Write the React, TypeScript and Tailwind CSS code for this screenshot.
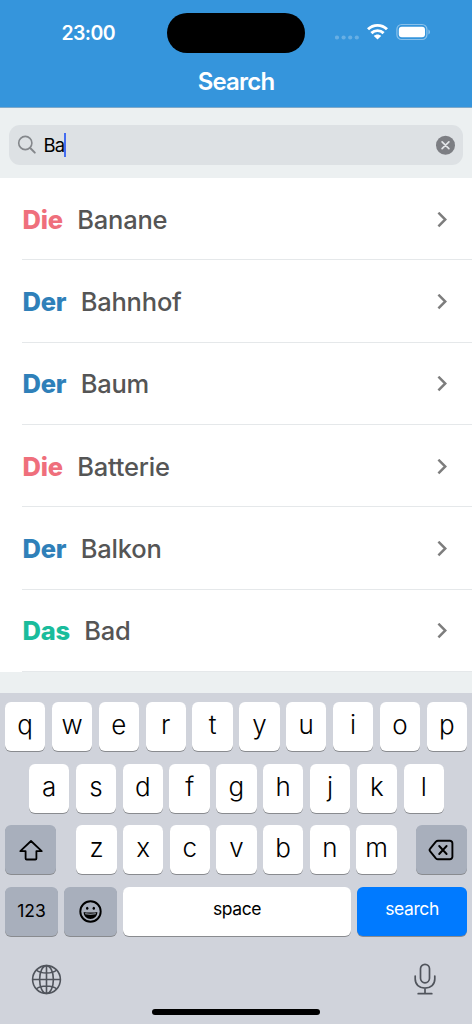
import type { ReactNode } from "react";
import clsx from "clsx";

const words = [
  { article: "Die", noun: "Banane" },
  { article: "Der", noun: "Bahnhof" },
  { article: "Der", noun: "Baum" },
  { article: "Die", noun: "Batterie" },
  { article: "Der", noun: "Balkon" },
  { article: "Das", noun: "Bad" },
];

const articleColors: Record<string, string> = {
  Die: "text-[#ef6f7c]",
  Der: "text-[#2f80b9]",
  Das: "text-[#1abc9c]",
};

function StatusBar() {
  return (
    <div className="flex h-[65px] items-start">
      <div className="w-[167px] pt-5 pl-[61.5px] text-[19.5px] leading-[27px] font-semibold tracking-[-0.6px]">
        23:00
      </div>
      <div className="mt-[12.5px] h-[40.5px] w-[138px] rounded-full bg-black" />
      <div className="flex pt-[23px] pl-[30px]">
        <svg width="24" height="18" viewBox="0 0 24 18" fill="#fff" opacity="0.25">
          <circle cx="2" cy="14.5" r="2.1" />
          <circle cx="8.6" cy="14.5" r="2.1" />
          <circle cx="15.2" cy="14.5" r="2.1" />
          <circle cx="21.8" cy="14.5" r="2.1" />
        </svg>
        <svg className="ml-2" width="21" height="18" viewBox="0 0 21 18" fill="none" stroke="#fff" strokeWidth="2.9">
          <path d="M1 6.3C6.2 1 14.8 1 20 6.3" />
          <path d="M4.4 10.1c3.4-3.3 8.8-3.3 12.2 0" />
          <path d="M6.8 12.9c2.1-2 5.3-2 7.4 0l-3.7 3.7z" fill="#fff" stroke="none" />
        </svg>
        <svg className="ml-2" width="35" height="18" viewBox="0 0 35 18">
          <rect x="0.9" y="1.5" width="30" height="15" rx="4.8" fill="none" stroke="#fff" strokeWidth="1.2" opacity="0.42" />
          <rect x="2.8" y="3.7" width="26.2" height="10.6" rx="3" fill="#fff" />
          <path d="M32.5 6.5c1.8.7 1.8 4.3 0 5z" fill="#fff" opacity="0.5" />
        </svg>
      </div>
    </div>
  );
}

function SearchField() {
  return (
    <div className="h-[70px] bg-[#ecf0f1] px-[9px] pt-[17px]">
      <div className="flex h-[39.5px] items-center rounded-[11px] bg-[#dde1e4] px-2">
        <svg width="20" height="20" viewBox="0 0 20 20" fill="none" stroke="#84878b" strokeLinecap="round">
          <circle cx="8.3" cy="8" r="6.6" strokeWidth="1.6" />
          <path d="M13.2 13l4.6 4.6" strokeWidth="2" />
        </svg>
        <span className="ml-[6.5px] pt-px text-[18.5px] leading-6 tracking-[-0.8px] text-black">Ba</span>
        <span className="h-[23.5px] w-[2px] bg-[#446cf0]" />
        <svg className="ml-auto" width="19" height="20" viewBox="0 0 19 20">
          <circle cx="9.5" cy="10.3" r="9.5" fill="#7c7e83" />
          <path d="M6.1 6.9l6.8 6.8M12.9 6.9l-6.8 6.8" stroke="#e2e5e8" strokeWidth="1.7" strokeLinecap="round" />
        </svg>
      </div>
    </div>
  );
}

function WordRow({ article, noun }: { article: string; noun: string }) {
  return (
    <li className="ml-[22px] flex h-[82.33px] items-center border-b border-[#e5e8ea] pt-[2px] pr-[25px] text-[25.5px] text-[#555]">
      <span className={clsx("pl-[0.5px] font-extrabold tracking-[-0.2px]", articleColors[article])}>{article}</span>
      <span className="ml-[14.3px] font-medium tracking-[-0.2px]">{noun}</span>
      <svg className="ml-auto" width="10" height="16" viewBox="0 0 10 16" fill="none" stroke="#7d7d7d" strokeWidth="2.5">
        <path d="M1.4 0.7L8.3 7.5l-6.9 6.8" />
      </svg>
    </li>
  );
}

function Key({ children, className }: { children: ReactNode; className?: string }) {
  return (
    <div className={clsx("flex h-[49px] items-center justify-center rounded-[6px] shadow-[0_1px_0_#898b8f]", className)}>
      {children}
    </div>
  );
}

function LetterKeys({ letters }: { letters: string }) {
  return letters.split("").map((letter) => (
    <Key key={letter} className="w-[40.4px] bg-white pb-[4px] text-[26px] font-[350]">
      {letter}
    </Key>
  ));
}

function Keyboard() {
  return (
    <div className="h-[331px] bg-[#d0d3db] px-[5px] pt-[9px] text-black">
      <div className="flex flex-col gap-[12.5px]">
        <div className="flex justify-between">
          <LetterKeys letters="qwertyuiop" />
        </div>
        <div className="flex justify-between pr-[23px] pl-[24px]">
          <LetterKeys letters="asdfghjkl" />
        </div>
        <div className="flex justify-between">
          <Key className="w-[51px] bg-[#a8afbc]">
            <svg width="24" height="22" viewBox="0 0 24 22" fill="none" stroke="#000" strokeWidth="1.8" strokeLinejoin="round">
              <path d="M12 2L1.3 12.2h5.3v7.2c0 .7.4 1.1 1.1 1.1h8.6c.7 0 1.1-.4 1.1-1.1v-7.2h5.3z" />
            </svg>
          </Key>
          <div className="flex gap-[6.3px] pl-[1px]">
            <LetterKeys letters="zxcvbnm" />
          </div>
          <Key className="w-[51px] bg-[#a8afbc]">
            <svg width="26" height="22" viewBox="0 0 26 22" fill="none" stroke="#000" strokeWidth="1.9" strokeLinecap="round" strokeLinejoin="round">
              <path d="M10 1.8h11.9a2.5 2.5 0 0 1 2.5 2.5v13.4a2.5 2.5 0 0 1-2.5 2.5H10c-.9 0-1.5-.3-2.1-.9L2.2 12.4c-.9-.9-.9-1.9 0-2.8L7.9 2.7c.6-.6 1.2-.9 2.1-.9z" />
              <path d="M11.2 7l7.4 8M18.6 7l-7.4 8" />
            </svg>
          </Key>
        </div>
        <div className="flex gap-[6px]">
          <Key className="w-[53px] bg-[#a8afbc] text-[17.5px] tracking-[-0.1px]">123</Key>
          <Key className="w-[53px] bg-[#a8afbc]">
            <svg width="23" height="23" viewBox="0 0 23 23">
              <circle cx="11.5" cy="11.5" r="10.2" fill="none" stroke="#000" strokeWidth="1.9" />
              <ellipse cx="8.2" cy="8.2" rx="1.2" ry="1.5" />
              <ellipse cx="14.8" cy="8.2" rx="1.2" ry="1.5" />
              <path d="M4.7 12c2 .7 11.6.7 13.6 0 .2 4-3 6.9-6.800 6.900S4.500 16 4.700 12z" />
              <path d="M6 13.3c3 .5 8 .5 11 0l-.3.9c-2.800.6-7.600.6-10.400 0z" fill="#a8afbc" />
            </svg>
          </Key>
          <Key className="w-[228px] bg-white pb-[3px] text-[17.5px] tracking-[-0.4px]">space</Key>
          <Key className="flex-1 bg-[#007aff] pb-[3px] text-[17.5px] tracking-[-0.4px] text-white">search</Key>
        </div>
      </div>
      <div className="flex items-center justify-between pt-[27px] pr-[31px] pl-[26px]">
        <svg width="31" height="32" viewBox="0 0 31 32" fill="none" stroke="#50545c" strokeWidth="1.6">
          <circle cx="15.5" cy="16.5" r="13.9" />
          <ellipse cx="15.5" cy="16.5" rx="6.9" ry="13.9" />
          <path d="M15.5 2.5v28M1.5 16.5h28M5.2 7c5 4 15.6 4 20.6 0M5.2 26c5-4 15.6-4 20.6 0" />
        </svg>
        <svg width="22" height="32" viewBox="0 0 22 32" fill="none" stroke="#50545c" strokeWidth="1.7" strokeLinecap="round">
          <rect x="6.5" y="1.3" width="9" height="18.5" rx="4.5" />
          <path d="M1.2 13v3c0 5.5 4 9.2 9.8 9.2s9.8-3.7 9.8-9.2v-3M11 25.2v5.5M4.2 30.7h13.6" />
        </svg>
      </div>
      <div className="mx-auto mt-[14px] h-[6px] w-[168px] rounded-full bg-black" />
    </div>
  );
}

export default function App() {
  return (
    <div className="flex h-[1024px] w-[472px] flex-col overflow-hidden bg-[#ecf0f1] font-['Inter',sans-serif]">
      <header className="h-[108px] border-b border-[#7fa9c9] bg-[#3595dc] text-white">
        <StatusBar />
        <h1 className="text-center text-[24px] leading-[34px] font-semibold tracking-[-0.8px]">Search</h1>
      </header>
      <SearchField />
      <ul className="h-[494px] bg-white">
        {words.map((word) => (
          <WordRow key={word.noun} {...word} />
        ))}
      </ul>
      <div className="h-[21px]" />
      <Keyboard />
    </div>
  );
}
